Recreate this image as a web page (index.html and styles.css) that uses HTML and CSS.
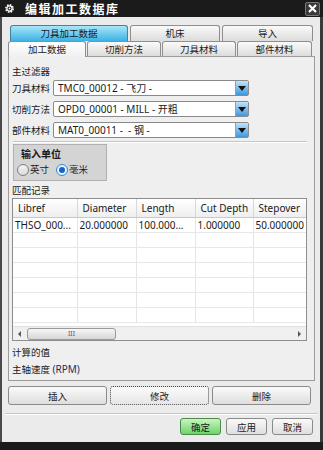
FILE: index.html
```html
<!DOCTYPE html>
<html lang="zh-CN">
  <head>
    <meta charset="UTF-8" />
    <title>编辑加工数据库</title>
    <link rel="stylesheet" href="styles.css">
  </head>
  <body>
    <div class="window">
      <div class="titlebar">
        <svg class="gear" width="11" height="11" viewBox="0 0 11 11">
          <circle cx="5.5" cy="5.5" r="3.6" fill="none" stroke="#fff" stroke-width="1.6" stroke-dasharray="1.6 1.2" />
          <circle cx="5.5" cy="5.5" r="2.6" fill="none" stroke="#fff" stroke-width="1.2" />
          <circle cx="5.5" cy="5.5" r="1" fill="#fff" />
        </svg>
        <span class="title">编辑加工数据库</span>
        <span class="close">
          <svg width="9" height="9" viewBox="0 0 9 9">
            <path d="M1 1L8 8M8 1L1 8" stroke="#fff" stroke-width="2.2" />
          </svg>
        </span>
      </div>
      <div class="client">
        <div class="tabs tabs-top">
          <div class="tab tab-on w118">刀具加工数据</div>
          <div class="tab w90">机床</div>
          <div class="tab w91">导入</div>
        </div>
        <div class="tabs tabs-sub">
          <div class="tab tab-on w78">加工数据</div>
          <div class="tab w74">切削方法</div>
          <div class="tab w74">刀具材料</div>
          <div class="tab w75">部件材料</div>
        </div>
        <div class="panel">
          <div class="caption">主过滤器</div>
          <div class="field">
            <span class="field-label">刀具材料</span>
            <div class="combo"><span>TMC0_00012 - 飞刀 -</span><i class="drop"></i></div>
          </div>
          <div class="field">
            <span class="field-label">切削方法</span>
            <div class="combo"><span>OPD0_00001 - MILL - 开粗</span><i class="drop"></i></div>
          </div>
          <div class="field">
            <span class="field-label">部件材料</span>
            <div class="combo"><span>MAT0_00011 - &nbsp;- 钢 -</span><i class="drop"></i></div>
          </div>
          <div class="rule"></div>
          <div class="units">
            <div class="units-title">输入单位</div>
            <div class="radios">
              <span class="radio"><i class="dot"></i>英寸</span>
              <span class="radio radio-on"><i class="dot"></i>毫米</span>
            </div>
          </div>
          <div class="caption caption-rec">匹配记录</div>
          <div class="grid">
            <table>
              <colgroup>
                <col class="c1"><col class="c2"><col class="c3"><col class="c4"><col class="c5">
              </colgroup>
              <thead>
                <tr><th>Libref</th><th>Diameter</th><th>Length</th><th>Cut Depth</th><th>Stepover</th></tr>
              </thead>
              <tbody>
                <tr><td>THSO_000...</td><td>20.000000</td><td>100.000...</td><td>1.000000</td><td>50.000000</td></tr>
                <tr><td></td><td></td><td></td><td></td><td></td></tr>
                <tr><td></td><td></td><td></td><td></td><td></td></tr>
                <tr><td></td><td></td><td></td><td></td><td></td></tr>
                <tr><td></td><td></td><td></td><td></td><td></td></tr>
                <tr><td></td><td></td><td></td><td></td><td></td></tr>
                <tr><td></td><td></td><td></td><td></td><td></td></tr>
              </tbody>
            </table>
            <div class="hscroll">
              <span class="arr arr-l"></span>
              <span class="thumb">III</span>
              <span class="arr arr-r"></span>
            </div>
          </div>
          <div class="caption caption-calc">计算的值</div>
          <div class="caption">主轴速度 <span class="unit">(RPM)</span></div>
        </div>
        <div class="actions">
          <button class="btn btn-wide">插入</button>
          <button class="btn btn-wide btn-focus">修改</button>
          <button class="btn btn-wide">删除</button>
        </div>
        <div class="rule rule-foot"></div>
        <div class="footer">
          <button class="btn btn-small btn-ok">确定</button>
          <button class="btn btn-small">应用</button>
          <button class="btn btn-small">取消</button>
        </div>
      </div>
      <div class="bottom"></div>
    </div>
  </body>
</html>
```

FILE: styles.css
```css
* {
  margin: 0;
  padding: 0;
  box-sizing: border-box;
}
body {
  font-family: "Noto Sans", "Noto Sans CJK SC", sans-serif;
  font-size: 9.5px;
  color: #1a1a1a;
  background: #1b1b1b;
}
.window {
  width: 323px;
  height: 450px;
  display: flex;
  flex-direction: column;
  background: #1b1b1b;
}
.titlebar {
  height: 17px;
  display: flex;
  align-items: center;
  padding: 0 3px 0 4px;
  color: #fff;
}
.gear {
  margin-right: 10px;
}
.title {
  flex: 1;
  font-family: "Noto Sans CJK SC", sans-serif;
  font-size: 12px;
  font-weight: bold;
  letter-spacing: 1.5px;
}
.close {
  width: 15px;
  height: 14px;
  display: flex;
  align-items: center;
  justify-content: center;
  background: #3a3a3a;
  border: 1px solid #777;
  border-radius: 2px;
}
.client {
  flex: 1;
  background: #ebebeb;
  border-left: 2px solid #4a4a4a;
  border-right: 3px solid #3a3a3a;
  padding: 8px 5px 0 6px;
}
/* 选项卡 */
.tabs {
  display: flex;
  gap: 1px;
}
.tabs-top {
  margin-left: 2px;
  gap: 2px;
}
.tab {
  flex: none;
  height: 16px;
  border: 1px solid #8e8e8e;
  border-bottom: none;
  border-radius: 3px 3px 0 0;
  background: linear-gradient(#fafafa, #dcdcdc);
  text-align: center;
  line-height: 15px;
}
.tabs-top .tab-on {
  background: linear-gradient(#a8e6fa, #3cb2e4);
  border-color: #4a7fa0;
}
.tabs-sub .tab {
  height: 15px;
}
.tabs-sub .tab-on {
  height: 16px;
  margin-bottom: -1px;
  position: relative;
  background: linear-gradient(#ffffff, #f0f0f0);
}
.w118 { width: 118px; }
.w90 { width: 90px; }
.w91 { width: 91px; }
.w78 { width: 78px; }
.w74 { width: 74px; }
.w75 { width: 75px; }
/* 主面板 */
.panel {
  height: 325px;
  border: 1px solid #9c9c9c;
  background: #efefef;
  padding: 7px 5px 0 3px;
}
.caption {
  height: 16px;
  line-height: 16px;
}
.unit {
  font-size: 10px;
  color: #1c2c5c;
}
.field {
  display: flex;
  align-items: center;
  height: 16px;
  margin-bottom: 5px;
}
.field-label {
  flex: 0 0 41px;
  white-space: nowrap;
}
.combo {
  flex: 0 0 196px;
  height: 16px;
  display: flex;
  border: 1px solid #8a8a8a;
  border-radius: 2px;
  background: #fff;
}
.combo span {
  flex: 1;
  padding-left: 4px;
  font-size: 10px;
  line-height: 14px;
  white-space: nowrap;
  overflow: hidden;
}
.drop {
  flex: 0 0 13px;
  background: linear-gradient(#bfe4fb, #3f97dd);
  border-left: 1px solid #7ba7cf;
  display: flex;
  align-items: center;
  justify-content: center;
}
.drop::after {
  content: "";
  border-left: 4px solid transparent;
  border-right: 4px solid transparent;
  border-top: 5px solid #111;
}
.rule {
  height: 1px;
  background: #c6c6c6;
  margin: -2px 2px 2px 1px;
  box-shadow: 0 1px 0 #fff;
}
.units {
  width: 94px;
  height: 37px;
  margin-left: 1px;
  background: #d4d4d4;
  border: 1px solid #b0b0b0;
  padding: 2px 0 0 3px;
}
.units-title {
  font-size: 10px;
  font-weight: bold;
  padding-left: 4px;
  line-height: 14px;
}
.radios {
  display: flex;
  gap: 7px;
  margin-top: 2px;
}
.radio {
  display: flex;
  align-items: center;
  gap: 1px;
  line-height: 14px;
}
.dot {
  width: 12px;
  height: 12px;
  border-radius: 50%;
  border: 1px solid #7e7e7e;
  background: linear-gradient(#f4f4f4, #dadada);
  display: flex;
  align-items: center;
  justify-content: center;
}
.radio-on .dot {
  border-color: #3a8ad0;
  background: radial-gradient(#fff, #d4ecfb);
}
.radio-on .dot::after {
  content: "";
  width: 6px;
  height: 6px;
  border-radius: 50%;
  background: #1166cc;
}
.caption-rec {
  margin-top: 2px;
  height: 15px;
  line-height: 15px;
}
/* 匹配记录表格 */
.grid {
  width: 295px;
  height: 143px;
  border: 1px solid #8d8d8d;
  background: #fff;
  overflow: hidden;
  display: flex;
  flex-direction: column;
  font-size: 10px;
}
.grid table {
  width: 350px;
  table-layout: fixed;
  border-collapse: collapse;
}
.c1 { width: 64px; }
.c2 { width: 59px; }
.c3 { width: 59px; }
.c4 { width: 58px; }
.c5 { width: 110px; }
.grid th {
  height: 18px;
  font-weight: normal;
  text-align: left;
  padding-left: 5px;
  background: linear-gradient(#ffffff, #eeeeee);
  border-right: 1px solid #d8d8d8;
  border-bottom: 1px solid #c8c8c8;
}
.grid td {
  height: 15px;
  padding-left: 2px;
  white-space: nowrap;
  overflow: hidden;
  border-right: 1px solid #e4e4e4;
  border-bottom: 1px solid #e8e8e8;
}
.hscroll {
  margin-top: auto;
  height: 14px;
  display: flex;
  align-items: center;
  background: #f0f0f0;
  border-top: 1px solid #e0e0e0;
  padding: 0 5px;
}
.arr {
  width: 0;
  height: 0;
  border-top: 3px solid transparent;
  border-bottom: 3px solid transparent;
}
.arr-l {
  border-right: 3px solid #555;
}
.arr-r {
  margin-left: auto;
  border-left: 3px solid #555;
}
.thumb {
  width: 89px;
  height: 12px;
  margin-left: 6px;
  border: 1px solid #9a9a9a;
  border-radius: 3px;
  background: linear-gradient(#f6f6f6, #d6d6d6);
  text-align: center;
  font-size: 7px;
  line-height: 10px;
  color: #555;
}
.caption-calc {
  margin-top: 4px;
}
/* 按钮 */
.btn {
  font-family: "Noto Sans", "Noto Sans CJK SC", sans-serif;
  font-size: 9.5px;
  color: #1a1a1a;
  border: 1px solid #8a8a8a;
  border-radius: 3px;
  background: linear-gradient(#fafafa, #dedede);
}
.actions {
  display: flex;
  gap: 3px;
  margin-top: 5px;
}
.btn-wide {
  width: 99px;
  height: 19px;
}
.btn-focus {
  border: 1px dotted #444;
  background: linear-gradient(#fbfbfb, #e6e6e6);
}
.rule-foot {
  margin: 8px -3px 0 -3px;
}
.footer {
  display: flex;
  justify-content: flex-end;
  gap: 5px;
  margin-top: 4px;
  padding-right: 2px;
}
.btn-small {
  width: 41px;
  height: 17px;
}
.btn-ok {
  border-color: #4c8a4c;
  background: linear-gradient(#c8f5c0, #6ed468);
}
.bottom {
  height: 8px;
  background: #1b1b1b;
}
```
